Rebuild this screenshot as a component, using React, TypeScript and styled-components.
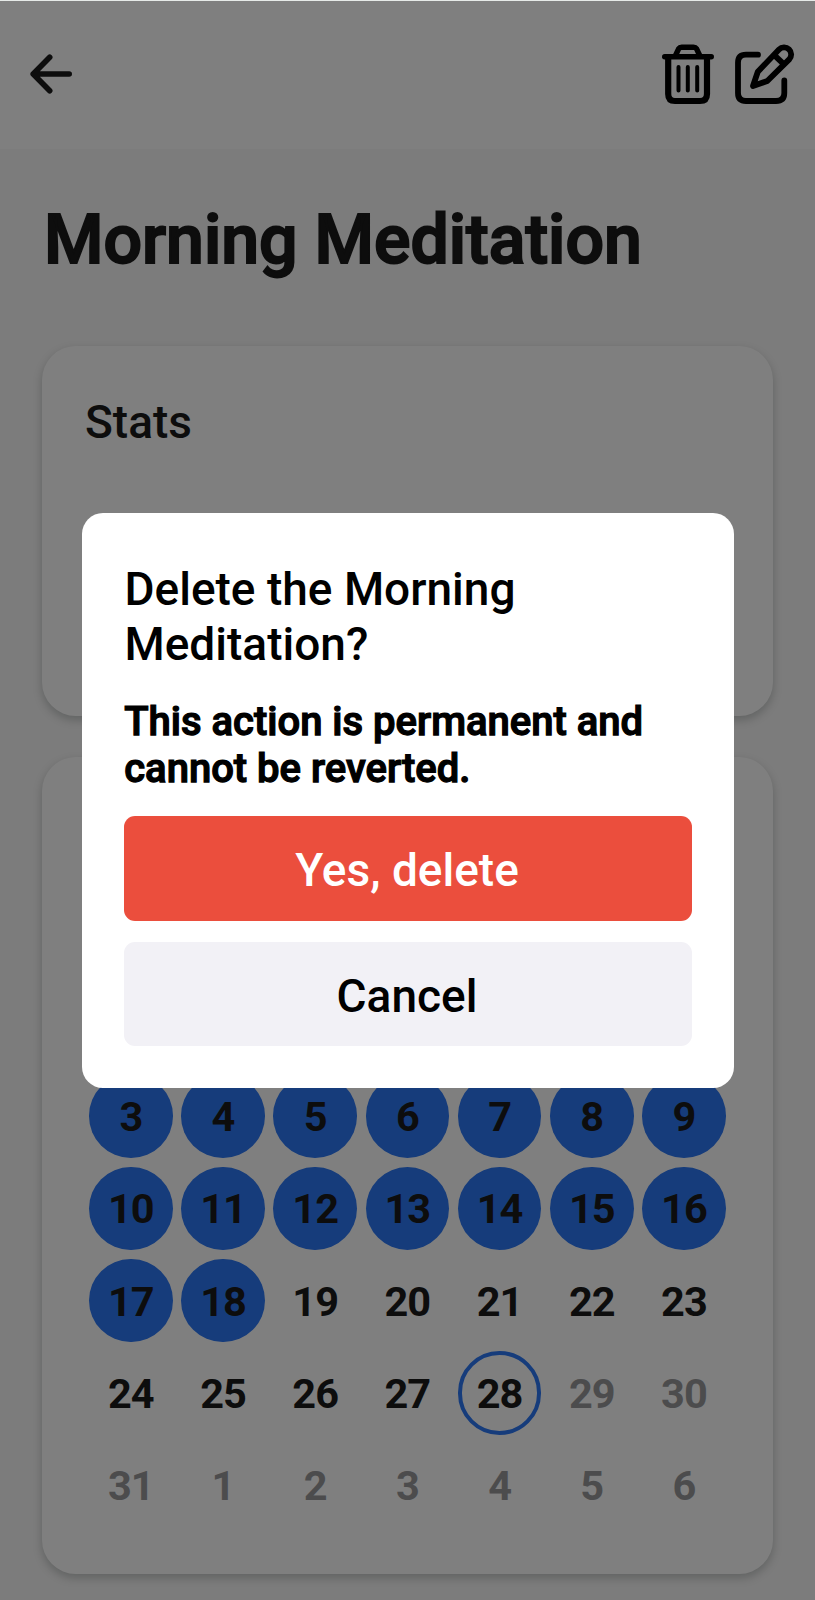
import React from 'react';
import styled, { createGlobalStyle, css } from 'styled-components';

const GlobalStyle = createGlobalStyle`
  * { box-sizing: border-box; }
  body { margin: 0; background: #f8f8f8; font-family: Roboto, sans-serif; color: #1a1a1a; }
`;

const Screen = styled.div`
  position: relative;
  height: 1600px;
  overflow: hidden;
  background: #f8f8f8;
`;

const Header = styled.header`
  height: 149px;
  padding: 0 15px 4px 29px;
  display: flex;
  align-items: center;
  justify-content: space-between;
  background: #ffffff;
`;

const Actions = styled.div`
  display: flex;
  gap: 3px;
`;

const Title = styled.h1`
  margin: 0;
  padding: 49px 0 0 44px;
  height: 197px;
  font-size: 68px;
  line-height: 84px;
  font-weight: 500;
  -webkit-text-stroke: 2px #1a1a1a;
`;

const Cards = styled.main`
  padding: 0 42px;
  display: flex;
  flex-direction: column;
  gap: 41px;
`;

const Card = styled.section<{ $height: number }>`
  height: ${(p) => p.$height}px;
  padding: 42px 43px;
  border-radius: 34px;
  background: #ffffff;
  box-shadow: 0 4px 10px rgba(0, 20, 15, 0.22);
`;

const CardTitle = styled.h2`
  margin: 7px 0 0;
  font-size: 46px;
  line-height: 54px;
  font-weight: 500;
`;

const CalendarCard = styled(Card)`
  display: flex;
  flex-direction: column;
  justify-content: flex-end;
  padding: 0 47px 46.7px;
`;

const Days = styled.div`
  display: grid;
  grid-template-columns: repeat(7, 83.6px);
  grid-auto-rows: 83.6px;
  gap: 8.6px;
`;

const Day = styled.div<{ $state?: 'done' | 'today' | 'muted' }>`
  display: flex;
  align-items: center;
  justify-content: center;
  padding-top: 1px;
  border-radius: 50%;
  font-size: 41.5px;
  font-weight: 700;
  letter-spacing: -1px;
  ${(p) => p.$state === 'done' && css`background: #2c78f6;`}
  ${(p) => p.$state === 'today' && css`border: 4px solid #2c78f6;`}
  ${(p) => p.$state === 'muted' && css`color: #99999b;`}
`;

const Backdrop = styled.div`
  position: absolute;
  inset: 0;
  display: flex;
  align-items: center;
  justify-content: center;
  background: rgba(0, 0, 0, 0.5);
  border-top: 1px solid #e6eae8;
`;

const Dialog = styled.div`
  width: 652px;
  height: 575px;
  padding: 49px 42px 42px;
  border-radius: 21px;
  background: #ffffff;
  color: #000000;
`;

const DialogTitle = styled.h2`
  margin: 0 0 0 1px;
  font-size: 46px;
  line-height: 54.5px;
  font-weight: 500;
`;

const DialogText = styled.p`
  margin: 27px 0 24px 0.7px;
  font-size: 40px;
  line-height: 47px;
  font-weight: 500;
  -webkit-text-stroke: 1.25px #000000;
`;

const Button = styled.button<{ $danger?: boolean }>`
  display: block;
  width: 100%;
  height: 104.5px;
  margin: 0 0 21px;
  padding: 4px 1px 0 0;
  border: 0;
  border-radius: 11px;
  font: 500 46px Roboto, sans-serif;
  background: ${(p) => (p.$danger ? '#eb4e3d' : '#f2f1f6')};
  color: ${(p) => (p.$danger ? '#ffffff' : '#000000')};
`;

const ArrowIcon = () => (
  <svg width="46" height="46" viewBox="0 0 46 46" fill="none" stroke="#1a1a1a" strokeWidth="5.6" strokeLinecap="round" strokeLinejoin="round">
    <path d="M20.7 7.2 4.2 24 20.7 40.8M4.2 24H40.2" />
  </svg>
);

const TrashIcon = () => (
  <svg width="70" height="75" viewBox="0 0 70 75" fill="none" stroke="#000" strokeWidth="6.2" strokeLinecap="round" strokeLinejoin="round">
    <path d="M9.7 21.7H56.3" strokeWidth="5.4" />
    <path d="M13.2 22V59Q13.2 66 20 66H45Q52 66 52 59V22" />
    <path d="M20.5 20.5 23.6 13.8Q24.6 12.3 26.6 12.3H38.6Q40.6 12.3 41.6 13.8L44.7 20.5" strokeWidth="5.4" />
    <path d="M23.5 32V55.5M32.8 32V55.5M42.2 32V55.5" strokeWidth="4" />
  </svg>
);

const EditIcon = () => (
  <svg width="72" height="75" viewBox="0 0 72 75" fill="none" stroke="#000" strokeWidth="5.8" strokeLinecap="round" strokeLinejoin="round">
    <path d="M30 19.7H18Q10 19.7 10 27.7V58Q10 66 18 66H48Q56.3 66 56.3 58V45.5" />
    <path d="M25 51 29.8 36.8 51 14.6A7 7 0 0 1 61.2 24.4L39.3 46Z M46 19.8 56 29.4" />
  </svg>
);

const first = Array.from({ length: 29 }, (_, i) => i + 3);
const days = [...first, 1, 2, 3, 4, 5, 6];

const dayState = (i: number) =>
  i < 16 ? 'done' : i === 25 ? 'today' : i > 25 ? 'muted' : undefined;

export default function App() {
  return (
    <Screen>
      <GlobalStyle />
      <Header>
        <ArrowIcon />
        <Actions>
          <TrashIcon />
          <EditIcon />
        </Actions>
      </Header>
      <Title>Morning Meditation</Title>
      <Cards>
        <Card $height={370}>
          <CardTitle>Stats</CardTitle>
        </Card>
        <CalendarCard $height={816.5}>
          <Days>
            {days.map((day, i) => (
              <Day key={i} $state={dayState(i)}>{day}</Day>
            ))}
          </Days>
        </CalendarCard>
      </Cards>
      <Backdrop>
        <Dialog role="dialog" aria-modal="true">
          <DialogTitle>Delete the Morning Meditation?</DialogTitle>
          <DialogText>This action is permanent and cannot be reverted.</DialogText>
          <Button $danger>Yes, delete</Button>
          <Button>Cancel</Button>
        </Dialog>
      </Backdrop>
    </Screen>
  );
}
